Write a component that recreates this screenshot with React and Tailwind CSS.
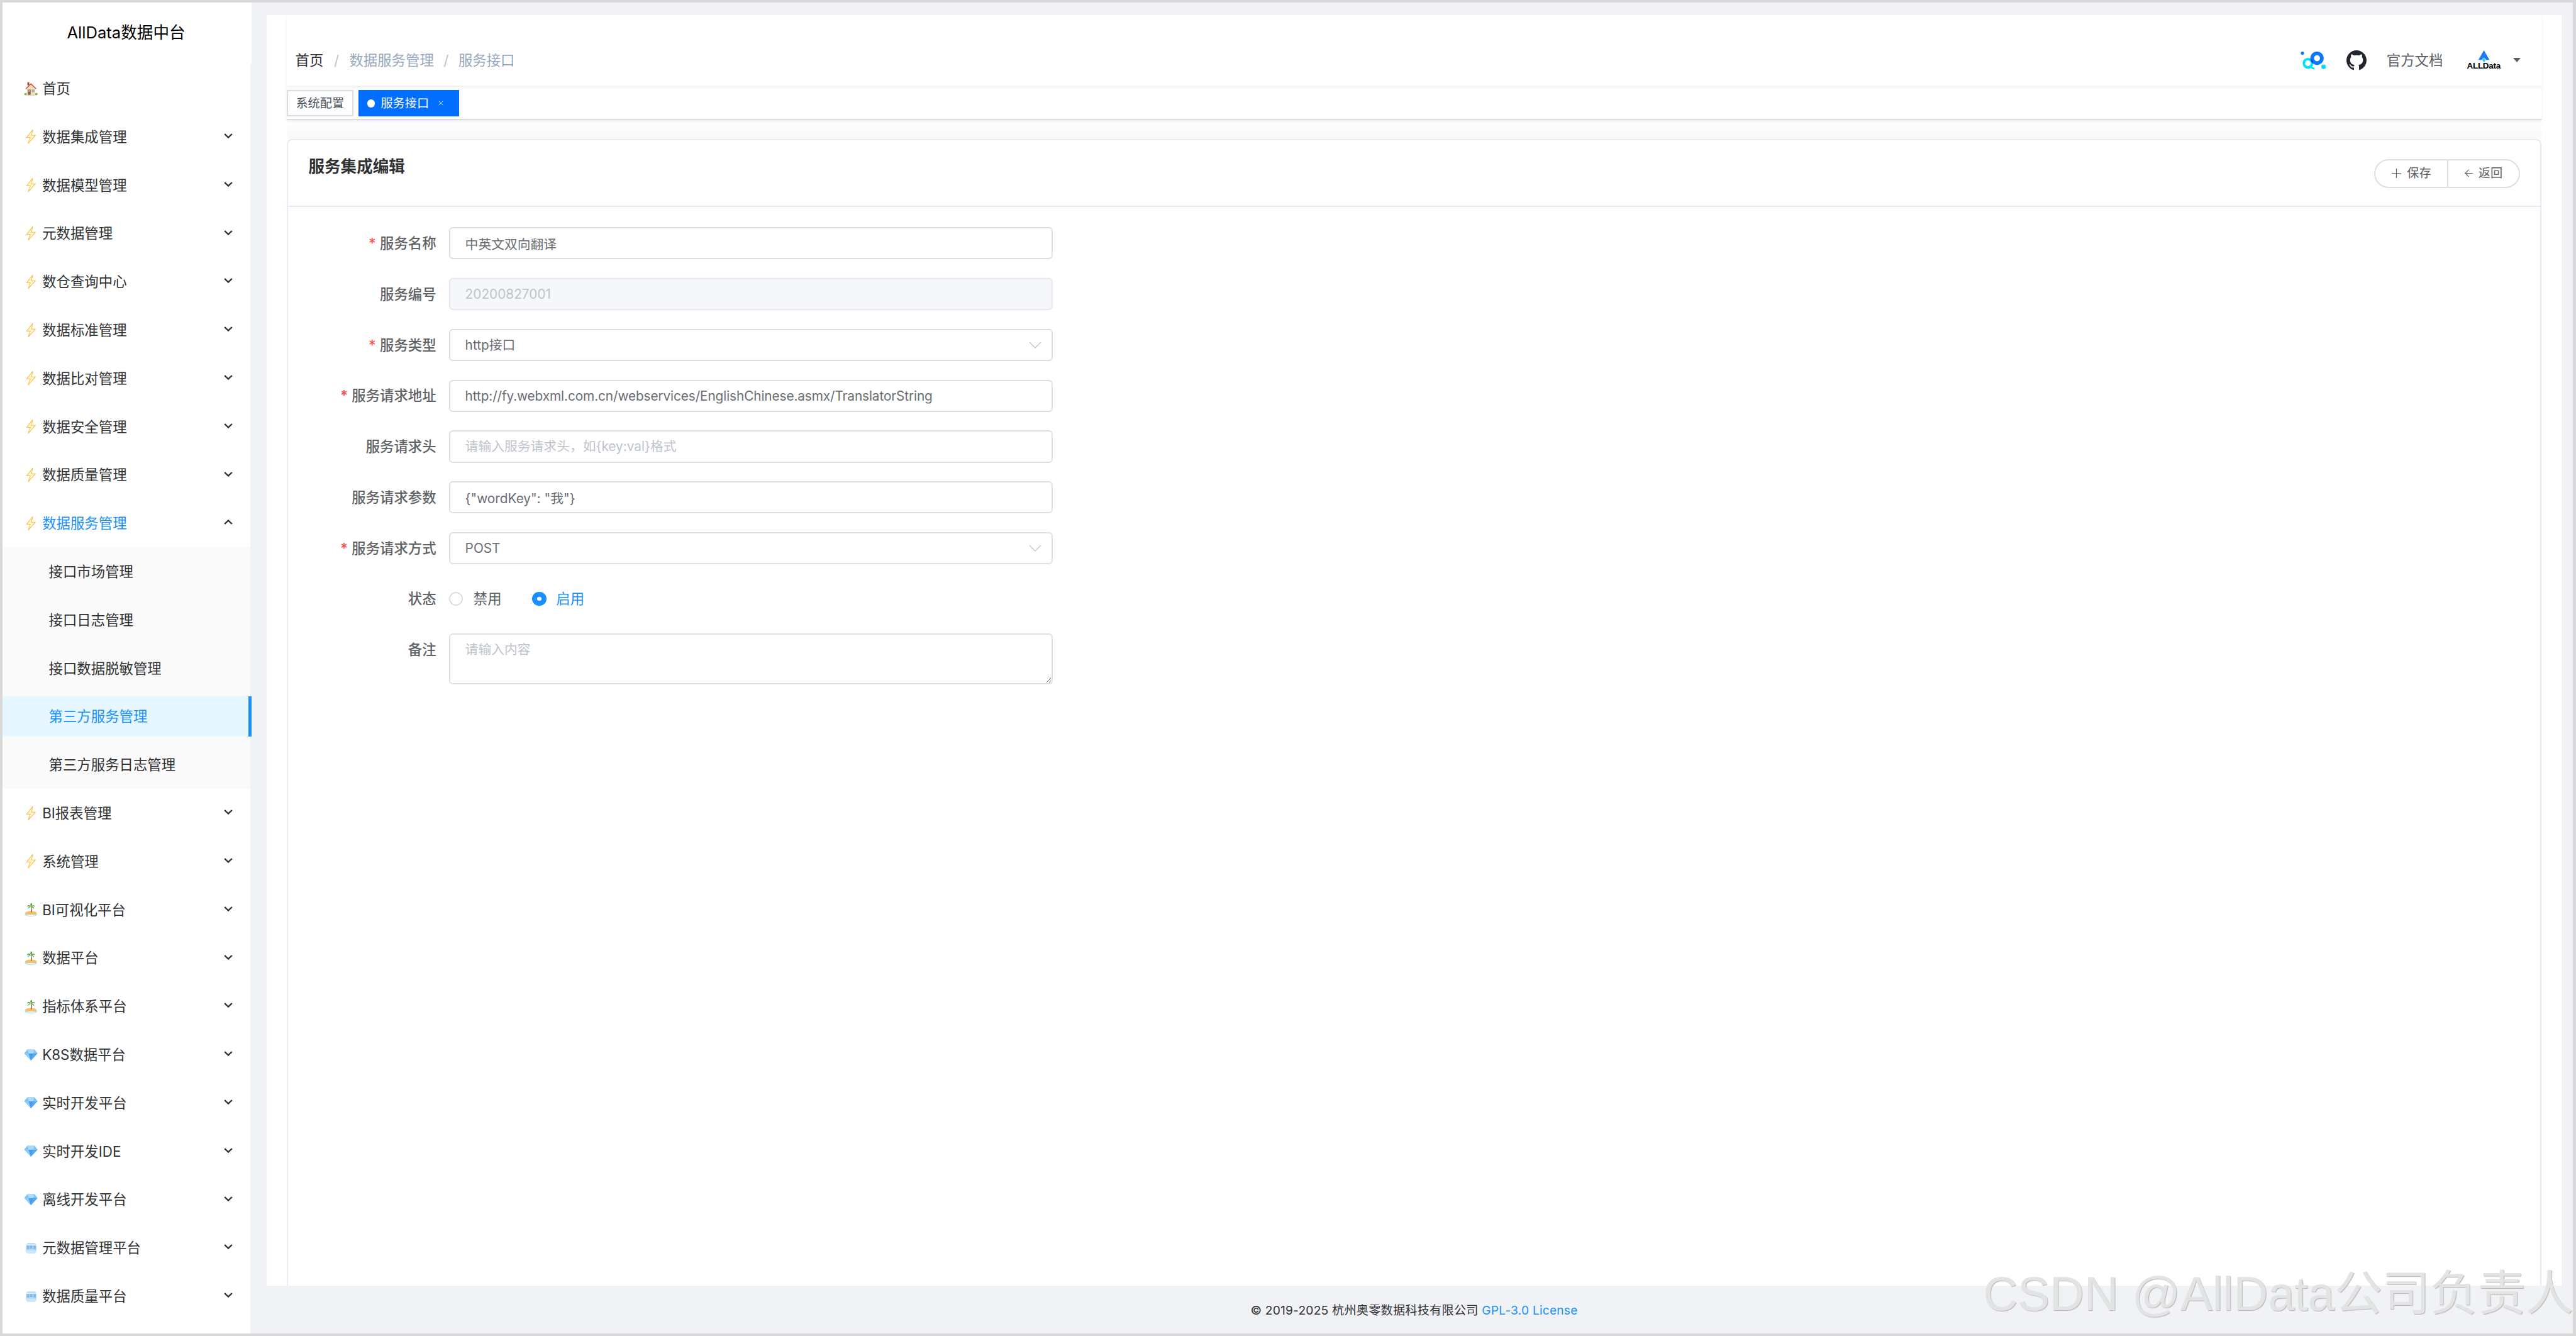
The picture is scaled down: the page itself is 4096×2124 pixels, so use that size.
const FONT = "font-['Inter','Noto_Sans_CJK_SC',sans-serif]"

function HouseIcon() {
  return (
    <svg viewBox="0 0 28 28" className="h-[22.4px] w-[22.4px]">
      <ellipse cx="3.500" cy="24.500" rx="2.800" ry="2.400" fill="#7fae4c" />
      <ellipse cx="24.500" cy="24.500" rx="2.800" ry="2.400" fill="#7fae4c" />
      <rect x="7" y="1" width="3.600" height="6" fill="#a8433a" />
      <path d="M5.500 13 14 5l8.500 8v13.500h-17z" fill="#f6deb2" />
      <path d="M3 13.500 14 2.800l11 10.700-1.300 1.200L14 5.600 4.300 14.700z" fill="#c9544a" />
      <rect x="8" y="15.500" width="5.400" height="10.500" fill="#96563f" />
      <rect x="9.200" y="16.800" width="3" height="2.800" fill="#a8d2ee" />
      <rect x="15.600" y="15.500" width="5.400" height="5" fill="#82bce6" stroke="#cfbc96" strokeWidth="0.600" />
      <rect x="6" y="26" width="16" height="1.200" fill="#cfc4ac" />
    </svg>
  )
}

function BoltIcon() {
  return (
    <svg viewBox="0 0 28 28" className="h-[22.4px] w-[22.4px]">
      <path
        d="M17.500.5 5.500 15.500h7.500L8.500 27.500 23 11.500h-8z"
        fill="#fff6d2"
        stroke="#fbbd45"
        strokeWidth="1.300"
        strokeLinejoin="round"
      />
    </svg>
  )
}

function PalmIcon() {
  return (
    <svg viewBox="0 0 28 28" className="h-[22.4px] w-[22.4px]">
      <ellipse cx="14" cy="23.500" rx="12.500" ry="4" fill="#a6e6ee" />
      <ellipse cx="14" cy="21" rx="11.500" ry="4" fill="#f6bf6a" />
      <ellipse cx="14" cy="25" rx="8" ry="1.300" fill="#e8fbfc" />
      <path d="M13.500 8.500c.6 4 .4 7.500 0 11h2c.4-4 .3-7.500-.6-11z" fill="#7c5a3c" />
      <path d="M14 8C11 3.500 7.500 4 5.500 8.500 8 6.500 11 7 14 8z" fill="#4c9a3c" />
      <path d="M14 8c3-4.500 6.500-4 8.500.5C20 6.500 17 7 14 8z" fill="#5aa945" />
      <path d="M14 8c-2-5-.5-6 .5-7 1.500 1 3 2.500-.5 7z" fill="#3f8a34" />
      <path d="M14 8c-3-1-6 1-6.500 5C10 10 12 9 14 8z" fill="#5aa945" />
      <path d="M14 8c3-1 6 1 6.500 5C18 10 16 9 14 8z" fill="#4c9a3c" />
    </svg>
  )
}

function GemIcon() {
  return (
    <svg viewBox="0 0 28 28" className="h-[22.4px] w-[22.4px]">
      <path d="M7 3h14l6 8-13 14L1 11z" fill="#6fbcf5" />
      <path d="M9 11h10l-5 14z" fill="#4a9bec" />
      <path d="M7 3h14l-2 8H9z" fill="#a9dcfb" />
      <path d="M1 11h8l5 14z" fill="#8acdf8" />
      <path d="M27 11h-8l-5 14z" fill="#5aa8f0" />
      <path d="M7 3 1 11h8zM21 3l6 8h-8z" fill="#7cc6f7" />
    </svg>
  )
}

function IceIcon() {
  return (
    <svg viewBox="0 0 28 28" className="h-[22.4px] w-[22.4px]">
      <path d="M4 6.500 8 4h14l3 2.500V21l-3 3.500H7L4 21z" fill="#b4d9f4" />
      <path d="M4 6.500h21V9H4z" fill="#d9eefb" />
      <path d="M6 9h4.500v7H6zM12 9h5v6h-5zM19 9h4.500v7H19z" fill="#7fb8e6" />
      <path d="M4 18h21v3l-3 3.500H7L4 21z" fill="#cde6f8" />
    </svg>
  )
}

const ICONS = { bolt: BoltIcon, palm: PalmIcon, gem: GemIcon, ice: IceIcon, house: HouseIcon }

function Chevron({ up }) {
  return (
    <svg viewBox="0 0 14 8" className="-mt-[3px] h-[8px] w-[14px]">
      <path
        d={up ? 'M1.200 7 7 1.500 12.800 7' : 'M1.200 1 7 6.500 12.800 1'}
        fill="none"
        stroke="#2b2d33"
        strokeWidth="2.400"
      />
    </svg>
  )
}

function MenuRow({ icon, label, active, open, arrow = true }) {
  const Icon = ICONS[icon]
  return (
    <div className="flex h-[76.8px] items-center pl-[34.4px] pr-[28.4px]">
      <span className="flex w-[28.8px] shrink-0 items-center"><Icon /></span>
      <span className={active ? 'flex-1 text-[#1890ff]' : 'flex-1 text-[#303133]'}>{label}</span>
      {arrow && <Chevron up={open} />}
    </div>
  )
}

function SubRow({ label, selected }) {
  if (selected) {
    return (
      <div className="my-[6.400px] flex h-[64px] w-[396px] items-center border-r-[5px] border-[#1890ff] bg-[#e6f7ff] pl-[73.600px] text-[#1890ff]">
        {label}
      </div>
    )
  }
  return <div className="flex h-[76.8px] items-center pl-[73.600px] text-[#303133]">{label}</div>
}

function Sidebar() {
  const before = [
    ['bolt', '数据集成管理'],
    ['bolt', '数据模型管理'],
    ['bolt', '元数据管理'],
    ['bolt', '数仓查询中心'],
    ['bolt', '数据标准管理'],
    ['bolt', '数据比对管理'],
    ['bolt', '数据安全管理'],
    ['bolt', '数据质量管理'],
  ]
  const after = [
    ['bolt', 'BI报表管理'],
    ['bolt', '系统管理'],
    ['palm', 'BI可视化平台'],
    ['palm', '数据平台'],
    ['palm', '指标体系平台'],
    ['gem', 'K8S数据平台'],
    ['gem', '实时开发平台'],
    ['gem', '实时开发IDE'],
    ['gem', '离线开发平台'],
    ['ice', '元数据管理平台'],
    ['ice', '数据质量平台'],
  ]
  return (
    <aside className="flex w-[396px] shrink-0 flex-col overflow-hidden text-[22.4px]">
      <div className="flex h-[98.400px] items-start justify-center bg-white pr-[3px] pt-[32px] text-[25.6px] leading-[32px] text-black">
        AllData数据中台
      </div>
      <div className="w-[394.400px] flex-1 bg-white">
        <MenuRow icon="house" label="首页" arrow={false} />
        {before.map(([icon, label]) => (
          <MenuRow key={label} icon={icon} label={label} />
        ))}
        <MenuRow icon="bolt" label="数据服务管理" active open />
        <div className="bg-[#fafafa]">
          <SubRow label="接口市场管理" />
          <SubRow label="接口日志管理" />
          <SubRow label="接口数据脱敏管理" />
          <SubRow label="第三方服务管理" selected />
          <SubRow label="第三方服务日志管理" />
        </div>
        {after.map(([icon, label]) => (
          <MenuRow key={label} icon={icon} label={label} />
        ))}
      </div>
    </aside>
  )
}

function BrandMark() {
  return (
    <svg viewBox="0 0 54 42" className="h-[33.6px] w-[43.2px]">
      <defs>
        <clipPath id="cyan-clip">
          <circle cx="16" cy="27" r="10.700" />
        </clipPath>
      </defs>
      <circle cx="5" cy="7" r="3.300" fill="#0a78ff" />
      <circle cx="16" cy="27" r="8.200" fill="none" stroke="#00e0ff" strokeWidth="5" />
      <path d="M23 35c1 2 3 2.500 6 2.500" fill="none" stroke="#00e0ff" strokeWidth="3.500" />
      <circle cx="34" cy="17" r="9.650" fill="none" stroke="#0a78ff" strokeWidth="7.300" />
      <circle cx="34" cy="17" r="9.650" fill="none" stroke="#0a3fe0" strokeWidth="7.300" clipPath="url(#cyan-clip)" />
      <circle cx="47" cy="34" r="4.500" fill="#00e0ff" />
    </svg>
  )
}

function GithubMark() {
  return (
    <svg viewBox="0 0 16 16" className="h-[32px] w-[32px]" fill="#24262f">
      <path d="M8 0C3.580 0 0 3.580 0 8c0 3.540 2.290 6.530 5.470 7.590.4.070.55-.17.55-.38 0-.19-.01-.82-.01-1.490-2.010.37-2.530-.49-2.690-.94-.09-.23-.48-.94-.82-1.130-.28-.15-.68-.52-.01-.53.63-.01 1.080.58 1.230.82.72 1.210 1.870.87 2.330.66.07-.52.28-.87.51-1.070-1.780-.2-3.640-.89-3.640-3.950 0-.87.31-1.590.82-2.150-.08-.2-.36-1.020.08-2.120 0 0 .67-.21 2.200.82.64-.18 1.320-.27 2-.27.68 0 1.360.09 2 .27 1.530-1.040 2.200-.82 2.200-.82.44 1.100.16 1.920.08 2.120.51.56.82 1.270.82 2.150 0 3.070-1.870 3.750-3.650 3.950.29.25.54.73.54 1.480 0 1.070-.01 1.930-.01 2.200 0 .21.15.46.55.38A8.013 8.013 0 0016 8c0-4.420-3.580-8-8-8z" />
    </svg>
  )
}

function AllDataLogo() {
  return (
    <span className="flex w-[57.6px] flex-col items-center">
      <svg viewBox="0 0 24 24" className="h-[19.2px] w-[19.2px]">
        <path d="M12 0 23 19h-6l-5-5-5 5H1z" fill="#1677ff" />
        <path d="M12 14l3.500 5-3.500 5-3.500-5z" fill="#38c6ff" />
      </svg>
      <span className="mt-[-1px] font-['Liberation_Sans',sans-serif] text-[13.5px] font-bold leading-[14px] tracking-[-0.3px] text-black">
        ALLData
      </span>
    </span>
  )
}

function Navbar() {
  return (
    <div className="relative z-10 flex h-[112px] shrink-0 items-center justify-between bg-white pr-[33px] pt-8 shadow-[0_2px_6px_rgba(0,21,41,0.07)]">
      <div className="flex items-center pl-[13.6px] text-[22.4px]">
        <span className="text-[#303133]">首页</span>
        <span className="mx-[16.500px] text-[#c0c4cc]">/</span>
        <span className="text-[#97a8be]">数据服务管理</span>
        <span className="mx-[15.500px] text-[#c0c4cc]">/</span>
        <span className="text-[#97a8be]">服务接口</span>
      </div>
      <div className="flex items-center">
        <BrandMark />
        <span className="ml-[31px]"><GithubMark /></span>
        <span className="ml-[32px] text-[22.4px] text-[#5a5e66]">官方文档</span>
        <span className="ml-[36px]"><AllDataLogo /></span>
        <span className="ml-[18px] h-0 w-0 border-x-[6px] border-t-[7.200px] border-x-transparent border-t-[#5a5e66]" />
      </div>
    </div>
  )
}

function TagsBar() {
  return (
    <div className="relative z-[5] flex h-[55px] shrink-0 items-start gap-2 border-b-2 border-[#d8dce5] bg-white pt-[7.400px] text-[19.2px] shadow-[0_2px_5px_rgba(0,0,0,0.08)]">
      <div className="flex h-[41.600px] w-[105.600px] items-center justify-center border-2 border-[#d8dce5] text-[#495060]">
        系统配置
      </div>
      <div className="flex h-[41.600px] w-[160px] items-center bg-[#006eff] pl-[14px] text-white">
        <span className="mr-[9px] h-[12.800px] w-[12.800px] rounded-full bg-white" />
        服务接口
        <svg viewBox="0 0 10 10" className="ml-[15px] h-[8px] w-[8px]">
          <path d="M1 1l8 8M9 1l-8 8" stroke="#fff" strokeWidth="1" fill="none" />
        </svg>
      </div>
    </div>
  )
}

function Label({ required, children }) {
  return (
    <label className="mr-[20px] w-[235.600px] shrink-0 text-right text-[22.4px] font-medium text-[#606266]">
      {required && <span className="mr-[6.400px] text-[#ff4949]">*</span>}
      {children}
    </label>
  )
}

const inputClass =
  'h-[51.200px] w-[960px] rounded-[6px] border-2 border-[#dcdfe6] bg-white px-[24px] text-[20.8px] text-[#6a6d73] outline-none placeholder:text-[#c0c4cc]'

function Field({ label, required, children }) {
  return (
    <div className="mb-[29.600px] flex h-[51.200px] items-center">
      <Label required={required}>{label}</Label>
      {children}
    </div>
  )
}

function SelectBox({ value }) {
  return (
    <div className="flex h-[51.200px] w-[960px] items-center justify-between rounded-[6px] border-2 border-[#dcdfe6] bg-white pl-[24px] pr-[16px] text-[20.8px] text-[#6a6d73]">
      {value}
      <svg viewBox="0 0 20 11" className="h-[11px] w-[20px]">
        <path d="M1 1l9 9 9-9" fill="none" stroke="#c0c4cc" strokeWidth="1.300" />
      </svg>
    </div>
  )
}

function EditCard() {
  return (
    <div className="flex flex-1 flex-col rounded-t-[8px] border-2 border-b-0 border-[#e6ebf5] bg-white">
      <div className="flex h-[105.600px] shrink-0 items-start justify-between border-b-2 border-[#e6ebf5] pl-[32.400px] pr-[32.400px] pt-[26px]">
        <h1 className="text-[25.6px] font-bold leading-[32px] text-[#303133]">服务集成编辑</h1>
        <div className="mt-[4px] flex h-[45.600px] w-[231.200px] rounded-full border-2 border-[#dcdfe6] text-[19.2px] text-[#606266]">
          <button className="flex w-[116px] items-center justify-center gap-[9px] border-r-2 border-[#dcdfe6]">
            <svg viewBox="0 0 16 16" className="h-[15px] w-[15px]">
              <path d="M8 0v16M0 8h16" stroke="#606266" strokeWidth="1.200" />
            </svg>
            保存
          </button>
          <button className="flex flex-1 items-center justify-center gap-[9px]">
            <svg viewBox="0 0 16 16" className="h-[13px] w-[13px]">
              <path d="M8 1 1 8l7 7M1 8h15" stroke="#606266" strokeWidth="1.400" fill="none" />
            </svg>
            返回
          </button>
        </div>
      </div>
      <form className="pt-[32.600px]">
        <Field label="服务名称" required>
          <input className={inputClass} readOnly value="中英文双向翻译" />
        </Field>
        <Field label="服务编号">
          <input
            className="h-[51.200px] w-[960px] rounded-[6px] border-2 border-[#e4e7ed] bg-[#f5f7fa] px-[24px] text-[20.8px] text-[#c0c4cc] outline-none"
            disabled
            value="20200827001"
          />
        </Field>
        <Field label="服务类型" required>
          <SelectBox value="http接口" />
        </Field>
        <Field label="服务请求地址" required>
          <input
            className={`${inputClass} tracking-[-0.11px]`}
            readOnly
            value="http://fy.webxml.com.cn/webservices/EnglishChinese.asmx/TranslatorString"
          />
        </Field>
        <Field label="服务请求头">
          <input className={inputClass} readOnly placeholder="请输入服务请求头，如{key:val}格式" />
        </Field>
        <Field label="服务请求参数">
          <input className={inputClass} readOnly value={'{"wordKey": "我"}'} />
        </Field>
        <Field label="服务请求方式" required>
          <SelectBox value="POST" />
        </Field>
        <Field label="状态">
          <div className="flex items-center text-[22.4px]">
            <span className="h-[22.400px] w-[22.400px] rounded-full border-2 border-[#dcdfe6] bg-white" />
            <span className="ml-[16.800px] text-[#606266]">禁用</span>
            <span className="ml-[48.800px] flex h-[22.400px] w-[22.400px] items-center justify-center rounded-full bg-[#1890ff]">
              <span className="h-[6.400px] w-[6.400px] rounded-full bg-white" />
            </span>
            <span className="ml-[15.500px] text-[#1890ff]">启用</span>
          </div>
        </Field>
        <div className="flex items-start">
          <div className="flex h-[51.200px] items-center">
            <Label>备注</Label>
          </div>
          <textarea
            readOnly
            placeholder="请输入内容"
            className="h-[81px] w-[960px] resize-y rounded-[6px] border-2 border-[#dcdfe6] bg-white px-[24px] py-[7.400px] text-[20.8px] leading-[31.200px] text-[#606266] outline-none placeholder:text-[#c0c4cc]"
          />
        </div>
      </form>
    </div>
  )
}

export default function App() {
  return (
    <div className={`relative h-screen w-screen overflow-hidden bg-[#d9d9d9] pb-[4px] pl-[4px] pr-[5px] pt-[4px] ${FONT}`}>
      <div className="flex h-full bg-[#f0f2f5]">
        <Sidebar />
        <main className="ml-[24px] flex min-w-0 flex-1 flex-col pt-[20px]">
          <div className="mr-[18px] flex min-h-0 flex-1 flex-col overflow-hidden bg-white px-[32px]">
            <Navbar />
            <TagsBar />
            <div className="h-[30px] shrink-0 bg-gradient-to-b from-white to-[#f9f9f9]" />
            <EditCard />
          </div>
          <footer className="mr-[18px] flex h-[76px] shrink-0 items-center justify-center pt-[3px] text-[19.2px] tracking-[0.2px] text-[#303133]">
            © 2019-2025 杭州奥零数据科技有限公司&nbsp;<span className="text-[#1890ff]">GPL-3.0 License</span>
          </footer>
        </main>
      </div>
      <div className="pointer-events-none absolute bottom-[22px] right-[4px] whitespace-nowrap font-['Liberation_Sans','Noto_Sans_CJK_SC',sans-serif] text-[76px] leading-[90px] text-[#e2e3e3] [text-shadow:1px_1px_1px_#b5b5b5]">
        CSDN @AllData公司负责人
      </div>
    </div>
  )
}
